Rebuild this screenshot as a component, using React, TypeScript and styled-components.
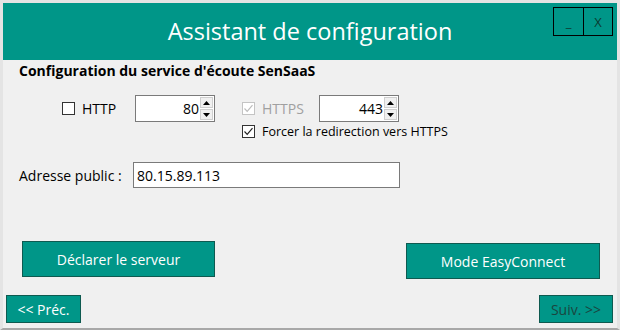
import styled, { createGlobalStyle } from "styled-components";

const Global = createGlobalStyle`
  html, body {
    margin: 0;
    padding: 0;
    background: #f0f0f0;
  }
  * {
    box-sizing: border-box;
  }
`;

const FONT = `"Open Sans", "Noto Sans", "Liberation Sans", sans-serif`;
const TEAL = "#009688";

export default function App() {
  return (
    <>
      <Global />
      <Window>
        <Header>
          <Title>Assistant de configuration</Title>
          <Controls>
            <ControlButton>_</ControlButton>
            <ControlButton>X</ControlButton>
          </Controls>
        </Header>
        <Content>
          <Heading>Configuration du service d'écoute SenSaaS</Heading>
          <PortGrid>
            <CheckLabel>
              <CheckBox checked={false} />
              <span>HTTP</span>
            </CheckLabel>
            <Spinner value="80" />
            <span />
            <CheckLabel $disabled>
              <CheckBox checked disabled />
              <span>HTTPS</span>
            </CheckLabel>
            <Spinner value="443" />
            <ForceRow>
              <CheckBox checked />
              <span>Forcer la redirection vers HTTPS</span>
            </ForceRow>
          </PortGrid>
          <AddressRow>
            <Label>Adresse public :</Label>
            <TextField>80.15.89.113</TextField>
          </AddressRow>
          <ActionRow>
            <TealButton $w={193} $h={36}>
              Déclarer le serveur
            </TealButton>
            <TealButton $w={194} $h={36} $offset={2}>
              Mode EasyConnect
            </TealButton>
          </ActionRow>
          <NavRow>
            <TealButton $w={75} $h={28}>
              {"<< Préc."}
            </TealButton>
            <TealButton $w={74} $h={28} $muted>
              {"Suiv. >>"}
            </TealButton>
          </NavRow>
        </Content>
      </Window>
    </>
  );
}

function CheckBox({
  checked,
  disabled,
}: {
  checked: boolean;
  disabled?: boolean;
}) {
  return (
    <Box $disabled={disabled}>
      {checked && (
        <svg width="11" height="11" viewBox="0 0 11 11">
          <path
            d="M1.5 5.5 L4.2 8.3 L9.5 2.2"
            fill="none"
            stroke={disabled ? "#bcbcbc" : "#222"}
            strokeWidth="1.2"
          />
        </svg>
      )}
    </Box>
  );
}

function Spinner({ value }: { value: string }) {
  return (
    <SpinField>
      <SpinValue>{value}</SpinValue>
      <SpinButtons>
        <SpinButton>
          <svg width="7" height="4" viewBox="0 0 7 4">
            <path d="M0 4 L3.5 0 L7 4 Z" fill="#000" />
          </svg>
        </SpinButton>
        <SpinButton>
          <svg width="7" height="4" viewBox="0 0 7 4">
            <path d="M0 0 L3.5 4 L7 0 Z" fill="#000" />
          </svg>
        </SpinButton>
      </SpinButtons>
    </SpinField>
  );
}

const Window = styled.div`
  width: 620px;
  height: 330px;
  display: flex;
  flex-direction: column;
  background: #f0f0f0;
  border: 3px solid #e4e4e4;
  border-bottom: 2px solid #a8a8a8;
  font-family: ${FONT};
  overflow: hidden;
`;

const Header = styled.div`
  position: relative;
  height: 57px;
  background: ${TEAL};
  display: flex;
  align-items: center;
  justify-content: center;
  flex-shrink: 0;
`;

const Title = styled.h1`
  margin: 0 0 2px 0;
  font-family: ${FONT};
  font-size: 23.5px;
  font-weight: 400;
  color: #fff;
`;

const Controls = styled.div`
  position: absolute;
  top: 4px;
  right: 4px;
  display: flex;
  border: 1px solid #000;
`;

const ControlButton = styled.div`
  width: 29px;
  height: 27px;
  display: flex;
  align-items: center;
  justify-content: center;
  font-size: 13px;
  color: #0c3b32;
  & + & {
    border-left: 1px solid #000;
  }
`;

const Content = styled.div`
  display: flex;
  flex-direction: column;
  padding: 1px 0 0 0;
  font-size: 14px;
  color: #000;
`;

const Heading = styled.div`
  margin-left: 16px;
  height: 20px;
  line-height: 20px;
  font-size: 14px;
  font-weight: 700;
`;

const PortGrid = styled.div`
  margin: 14px 0 0 59px;
  display: grid;
  grid-template-columns: 73px 80px 27px 77px 80px;
  grid-template-rows: 27px 18px;
  align-items: center;
`;

const CheckLabel = styled.label<{ $disabled?: boolean }>`
  display: flex;
  align-items: center;
  gap: 7px;
  color: ${(p) => (p.$disabled ? "#a0a0a0" : "#000")};
`;

const ForceRow = styled.label`
  grid-column: 4 / 6;
  display: flex;
  align-items: center;
  gap: 7px;
  white-space: nowrap;
  margin-top: 1px;
  font-size: 12.5px;
`;

const Box = styled.span<{ $disabled?: boolean }>`
  width: 13px;
  height: 13px;
  flex-shrink: 0;
  display: flex;
  align-items: center;
  justify-content: center;
  background: #fff;
  border: 1px solid ${(p) => (p.$disabled ? "#c4c4c4" : "#333")};
`;

const SpinField = styled.div`
  height: 27px;
  display: flex;
  align-items: stretch;
  background: #fff;
  border: 1px solid #7a7a7a;
`;

const SpinValue = styled.div`
  flex: 1;
  display: flex;
  align-items: center;
  justify-content: flex-end;
  padding-right: 1px;
`;

const SpinButtons = styled.div`
  width: 14px;
  display: flex;
  flex-direction: column;
  padding: 1px 1px 1px 0;
  gap: 1px;
`;

const SpinButton = styled.div`
  flex: 1;
  display: flex;
  align-items: center;
  justify-content: center;
  background: #f0f0f0;
  border: 1px solid #cfcfcf;
`;

const AddressRow = styled.div`
  margin: 22px 0 0 16px;
  display: flex;
  align-items: center;
`;

const Label = styled.span`
  width: 114px;
`;

const TextField = styled.div`
  width: 267px;
  height: 26px;
  display: flex;
  align-items: center;
  padding-left: 3px;
  background: #fff;
  border: 1px solid #7a7a7a;
`;

const ActionRow = styled.div`
  margin-top: 53px;
  padding: 0 17px 0 19px;
  display: flex;
  justify-content: space-between;
  align-items: flex-start;
`;

const NavRow = styled.div`
  margin-top: 16px;
  padding: 0 4px 0 3px;
  display: flex;
  justify-content: space-between;
`;

const TealButton = styled.button<{
  $w: number;
  $h: number;
  $muted?: boolean;
  $offset?: number;
}>`
  width: ${(p) => p.$w}px;
  height: ${(p) => p.$h}px;
  margin-top: ${(p) => p.$offset ?? 0}px;
  padding: 0;
  background: ${TEAL};
  border: 1px solid #0e5a50;
  color: ${(p) => (p.$muted ? "#1a4640" : "#fff")};
  font-family: ${FONT};
  font-size: 14px;
  cursor: pointer;
`;
